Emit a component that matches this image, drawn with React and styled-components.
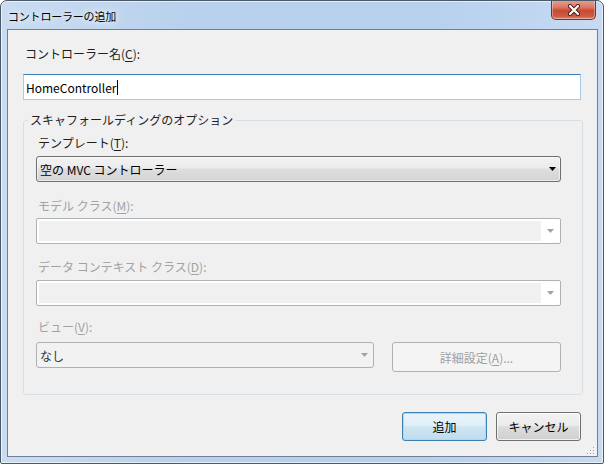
import React from 'react';
import styled, { createGlobalStyle } from 'styled-components';

const GlobalStyle = createGlobalStyle`
  html, body {
    margin: 0;
    padding: 0;
    background: #ffffff;
  }
  body {
    font-family: "Noto Sans CJK JP", "Noto Sans", sans-serif;
    font-size: 12px;
    color: #1e1e1e;
  }
`;

const Arrow = ({ color = '#000000' }) => (
  <svg width='7' height='4' viewBox='0 0 7 4'>
    <polygon points='0,0 7,0 3.5,4' fill={color} />
  </svg>
);

const CloseGlyph = () => (
  <svg width='14' height='12' viewBox='0 0 14 12'>
    <path d='M3 2 L11 10 M11 2 L3 10' stroke='#4a1c12' strokeWidth='4' strokeLinecap='round' />
    <path d='M3 2 L11 10 M11 2 L3 10' stroke='#ffffff' strokeWidth='2.2' strokeLinecap='round' />
  </svg>
);

const Grip = () => (
  <svg width='8' height='8' viewBox='0 0 8 8'>
    {[[6, 0], [3, 3], [6, 3], [0, 6], [3, 6], [6, 6]].map(([x, y]) => (
      <g key={`${x}-${y}`}>
        <rect x={x + 1} y={y + 1} width='1' height='1' fill='#ffffff' />
        <rect x={x} y={y} width='1' height='1' fill='#9aa0a6' />
      </g>
    ))}
  </svg>
);

const App = () => (
  <>
    <GlobalStyle />
    <Window>
      <TitleBar>
        <Title>コントローラーの追加</Title>
        <CloseButton><CloseGlyph /></CloseButton>
      </TitleBar>
      <Client>
        <Label>コントローラー名(<u>C</u>):</Label>
        <TextBox>HomeController<Caret /></TextBox>

        <Group>
          <Legend>スキャフォールディングのオプション</Legend>

          <Field $top={7} $gap={5}>
            <Label>テンプレート(<u>T</u>):</Label>
            <Select>
              <span>空の MVC コントローラー</span>
              <Arrow />
            </Select>
          </Field>

          <Field $top={16} $gap={4}>
            <Label $disabled>モデル クラス(<u>M</u>):</Label>
            <Combo>
              <ComboText />
              <ComboButton><Arrow color='#a3a3a3' /></ComboButton>
            </Combo>
          </Field>

          <Field $top={15} $gap={5}>
            <Label $disabled>データ コンテキスト クラス(<u>D</u>):</Label>
            <Combo>
              <ComboText />
              <ComboButton><Arrow color='#a3a3a3' /></ComboButton>
            </Combo>
          </Field>

          <Field $top={13} $gap={7}>
            <Label $disabled>ビュー(<u>V</u>):</Label>
            <Row>
              <ListSelect>
                <span>なし</span>
                <Arrow color='#a3a3a3' />
              </ListSelect>
              <Button $variant='disabled' $width={169} $height={30}>
                詳細設定(<u>A</u>)...
              </Button>
            </Row>
          </Field>
        </Group>

        <Footer>
          <Button $variant='default'>追加</Button>
          <Button>キャンセル</Button>
        </Footer>

        <GripCorner><Grip /></GripCorner>
      </Client>
    </Window>
  </>
);

export default App;

const Window = styled.div`
  width: 604px;
  height: 464px;
  box-sizing: border-box;
  border: 1px solid #4b5a6b;
  border-radius: 7px 7px 2px 2px;
  background: linear-gradient(90deg, #cadcf1 0%, #b9d1ec 30%, #b6d0ee 70%, #c7daf1 100%);
  box-shadow: inset 0 0 0 1px rgba(255, 255, 255, 0.6);
  padding: 0 5px 6px 6px;
  display: flex;
  flex-direction: column;
  overflow: hidden;
`;

const TitleBar = styled.div`
  height: 28px;
  display: flex;
  justify-content: space-between;
  align-items: flex-start;
  padding-left: 1px;
`;

const Title = styled.span`
  align-self: center;
  margin-top: 2px;
  font-size: 11px;
  letter-spacing: -0.2px;
  line-height: 16px;
  color: #000000;
  text-shadow: 0 0 6px rgba(255, 255, 255, 0.95), 0 0 12px rgba(255, 255, 255, 0.8);
`;

const CloseButton = styled.div`
  width: 45px;
  height: 20px;
  margin-top: -1px;
  margin-right: 2px;
  box-sizing: border-box;
  border: 1px solid #7a2f22;
  border-top: none;
  border-radius: 0 0 5px 5px;
  background: linear-gradient(#e7a392 0%, #d8755f 40%, #c94a32 55%, #cc5a42 85%, #dc8a73 100%);
  box-shadow: inset 0 0 0 1px rgba(255, 255, 255, 0.35);
  display: flex;
  align-items: center;
  justify-content: center;
`;

const Client = styled.div`
  position: relative;
  flex: 1;
  box-sizing: border-box;
  border: 1px solid #6f8094;
  background: #f0f0f0;
  padding: 16px 15px 0 15px;
  display: flex;
  flex-direction: column;
  align-items: flex-start;
`;

const Label = styled.div`
  margin-left: 2px;
  line-height: 16px;
  height: 16px;
  white-space: nowrap;
  color: ${({ $disabled }) => ($disabled ? '#a2a2a2' : '#1e1e1e')};

  u {
    text-underline-offset: 2px;
  }
`;

const TextBox = styled.div`
  margin-top: 12px;
  width: 558px;
  height: 26px;
  box-sizing: border-box;
  border: 1px solid #a9cbe6;
  border-top-color: #3c7db3;
  background: #ffffff;
  padding-left: 2px;
  display: flex;
  align-items: center;
  color: #000000;
  font-size: 12px;
`;

const Caret = styled.span`
  width: 1px;
  height: 15px;
  margin-left: 1px;
  background: #000000;
`;

const Group = styled.div`
  margin-top: 20px;
  width: 560px;
  box-sizing: border-box;
  border: 1px solid #d5dfe5;
  border-radius: 3px;
  padding: 0 21px 22px 12px;
  display: flex;
  flex-direction: column;
`;

const Legend = styled.div`
  align-self: flex-start;
  margin: -9px 0 0 -8px;
  padding: 0 2px;
  background: #f0f0f0;
  line-height: 16px;
  height: 16px;
  color: #1e1e1e;
`;

const Field = styled.div`
  margin-top: ${({ $top }) => $top}px;
  display: flex;
  flex-direction: column;
  gap: ${({ $gap }) => $gap}px;
`;

const Select = styled.div`
  height: 26px;
  box-sizing: border-box;
  border: 1px solid #707070;
  border-radius: 3px;
  background: linear-gradient(#f2f2f2 0%, #ececec 45%, #dedede 50%, #d4d4d4 100%);
  box-shadow: inset 0 0 0 1px rgba(255, 255, 255, 0.55);
  padding: 0 4px 0 3px;
  display: flex;
  align-items: center;
  justify-content: space-between;
  color: #000000;
`;

const Combo = styled.div`
  height: 26px;
  box-sizing: border-box;
  border: 1px solid #adb2b5;
  border-radius: 2px;
  background: #ffffff;
  padding: 2px 0 2px 2px;
  display: flex;
`;

const ComboText = styled.div`
  flex: 1;
  background: #f0f0f0;
`;

const ComboButton = styled.div`
  width: 19px;
  display: flex;
  align-items: center;
  justify-content: center;
`;

const Row = styled.div`
  display: flex;
  align-items: flex-start;
  gap: 18px;
`;

const ListSelect = styled.div`
  width: 338px;
  height: 26px;
  box-sizing: border-box;
  border: 1px solid #adb2b5;
  border-radius: 3px;
  background: #f2f2f2;
  padding: 0 5px 0 3px;
  display: flex;
  align-items: center;
  justify-content: space-between;
  color: #333333;
`;

const buttonLooks = {
  normal: `
    border: 1px solid #707070;
    background: linear-gradient(#f2f2f2 0%, #ebebeb 50%, #dddddd 50%, #cfcfcf 100%);
    box-shadow: inset 0 0 0 1px rgba(255, 255, 255, 0.7);
    color: #000000;
  `,
  default: `
    border: 1px solid #3c7fb1;
    background: linear-gradient(#eaf4fa 0%, #dfeef7 50%, #cfe6f3 50%, #bedcee 100%);
    box-shadow: inset 0 0 0 1px #9fe0f6;
    color: #000000;
  `,
  disabled: `
    border: 1px solid #adb2b5;
    background: #f4f4f4;
    color: #a0a0a0;
  `,
};

const Button = styled.div`
  width: ${({ $width }) => $width || 85}px;
  height: ${({ $height }) => $height || 29}px;
  box-sizing: border-box;
  border-radius: 3px;
  display: flex;
  align-items: center;
  justify-content: center;
  white-space: nowrap;
  ${({ $variant }) => buttonLooks[$variant || 'normal']}

  u {
    text-underline-offset: 2px;
  }
`;

const Footer = styled.div`
  margin-top: 17px;
  width: 558px;
  display: flex;
  justify-content: flex-end;
  gap: 9px;
`;

const GripCorner = styled.div`
  position: absolute;
  right: 2px;
  bottom: 1px;
  width: 8px;
  height: 8px;
  display: flex;
`;
